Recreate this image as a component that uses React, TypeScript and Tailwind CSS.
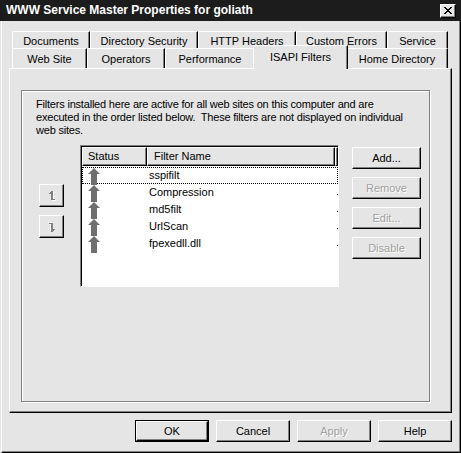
import React from 'react';

const font = "font-['Liberation_Sans',Arial,sans-serif]";
const raised =
  'bg-[#e5e5e5] border-t border-l border-t-white border-l-white border-r border-b border-r-black border-b-black shadow-[inset_-1px_-1px_0_#808080]';
const disabledText = 'text-[#a0a0a0] [text-shadow:1px_1px_0_#fff]';

const topTabs: [string, number][] = [
  ['Documents', 78],
  ['Directory Security', 108],
  ['HTTP Headers', 98],
  ['Custom Errors', 91],
  ['Service', 61],
];

const frontTabs: [string, number][] = [
  ['Web Site', 75],
  ['Operators', 78],
  ['Performance', 90],
  ['ISAPI Filters', 91],
  ['Home Directory', 102],
];

const filters = ['sspifilt', 'Compression', 'md5filt', 'UrlScan', 'fpexedll.dll'];

function StatusArrow() {
  return (
    <svg width="13" height="17" viewBox="0 0 13 17" className="shrink-0">
      <polygon points="6,0 12,6 9,6 9,17 3,17 3,6 0,6" fill="#6f6f6f" />
    </svg>
  );
}

function MoveGlyph({ down }: { down?: boolean }) {
  const shape = (
    <>
      <rect x="3" y="0" width="2" height="9" />
      <rect x="1" y="2" width="2" height="1" />
      <rect x="2" y="1" width="1" height="2" />
      <rect x="5" y="8" width="2" height="1" />
    </>
  );
  return (
    <svg width="8" height="10" viewBox="0 0 8 10" className={down ? 'rotate-180' : ''}>
      <g fill="#fff" transform="translate(1 1)">
        {shape}
      </g>
      <g fill="#808080">{shape}</g>
    </svg>
  );
}

function Button({
  label,
  disabled,
  primary,
  className = '',
}: {
  label: string;
  disabled?: boolean;
  primary?: boolean;
  className?: string;
}) {
  const inner = (
    <div
      className={`flex h-full w-full items-center justify-center ${raised} ${
        disabled ? disabledText : 'text-black'
      }`}
    >
      {label}
    </div>
  );
  if (primary) {
    return <div className={`border border-black ${className}`}>{inner}</div>;
  }
  return <div className={className}>{inner}</div>;
}

export default function App() {
  return (
    <div
      className={`${font} flex h-[453px] w-[461px] flex-col overflow-hidden bg-[#e5e5e5] text-[11px] leading-[13px] text-black`}
    >
      {/* title bar */}
      <div className="flex h-[21px] shrink-0 items-center justify-between bg-[#1c1c1c] pl-[6px] pr-[5px]">
        <span className="text-[12px] font-bold text-white">
          WWW Service Master Properties for goliath
        </span>
        <div
          className={`flex h-[14px] w-[16px] items-center justify-center ${raised}`}
        >
          <svg width="8" height="7" viewBox="0 0 8 7">
            <path d="M0 0 L7 7 M1 0 L8 7 M7 0 L0 7 M8 0 L1 7" stroke="#000" strokeWidth="1" />
          </svg>
        </div>
      </div>

      {/* body */}
      <div className="ml-px flex flex-1 flex-col border-b border-l border-r border-b-black border-l-white border-r-black shadow-[inset_-1px_-1px_0_#808080]">
        {/* tabs */}
        <div className="mt-[10px] pl-[10px]">
          <div className="flex h-[17px]">
            {topTabs.map(([label, w]) => (
              <div
                key={label}
                style={{ width: w }}
                className="flex items-start justify-center rounded-tl-[2px] border-l border-t border-l-white border-t-white border-r border-r-black pt-[3px] shadow-[inset_-1px_0_0_#808080]"
              >
                {label}
              </div>
            ))}
          </div>
          <div className="flex h-[20px] items-end">
            {frontTabs.map(([label, w]) => {
              const selected = label === 'ISAPI Filters';
              if (selected) {
                return (
                  <div
                    key={label}
                    style={{ width: w + 4 }}
                    className="relative z-10 -mx-[2px] -mb-px flex h-[24px] items-start justify-center rounded-tl-[2px] border-l border-t border-l-white border-t-white border-r border-r-black bg-[#e5e5e5] pt-[5px] shadow-[inset_-1px_0_0_#808080]"
                  >
                    {label}
                  </div>
                );
              }
              return (
                <div
                  key={label}
                  style={{ width: w }}
                  className="flex h-[20px] items-start justify-center rounded-tl-[2px] border-l border-t border-l-white border-t-white border-r border-r-black bg-[#e5e5e5] pt-[4px] shadow-[inset_-1px_0_0_#808080]"
                >
                  {label}
                </div>
              );
            })}
          </div>
        </div>

        {/* tab page */}
        <div className="ml-[7px] flex h-[345px] w-[443px] flex-col border-b border-l border-r border-t border-b-black border-l-white border-r-black border-t-white shadow-[inset_-1px_-1px_0_#808080]">
          <div className="ml-[11px] mt-[21px] h-[312px] w-[409px] border border-[#808080] shadow-[1px_1px_0_#fff,inset_1px_1px_0_#fff]">
            <p className="pl-[14px] pt-[7px] tracking-[-0.2px]">
              Filters installed here are active for all web sites on this computer and are
              <br />
              executed in the order listed below.&nbsp; These filters are not displayed on individual
              <br />
              web sites.
            </p>

            <div className="mt-[8px] flex pl-[17px]">
              <div className="flex flex-col gap-[8px] pt-[39px]">
                <div className={`flex h-[23px] w-[25px] items-center justify-center ${raised}`}>
                  <MoveGlyph />
                </div>
                <div className={`flex h-[23px] w-[25px] items-center justify-center ${raised}`}>
                  <MoveGlyph down />
                </div>
              </div>

              {/* list view */}
              <div className="ml-[16px] flex h-[142px] w-[259px] flex-col border border-b-white border-l-[#808080] border-r-white border-t-[#808080] bg-white shadow-[inset_1px_1px_0_#000]">
                <div className="ml-px mt-px flex h-[19px] shrink-0">
                  <div className={`flex w-[65px] items-center pl-[5px] ${raised}`}>Status</div>
                  <div className={`flex w-[188px] items-center pl-[6px] ${raised}`}>Filter Name</div>
                  <div className={`flex-1 ${raised}`} />
                </div>
                <div className="ml-px mt-px flex flex-col">
                  {filters.map((name, i) => (
                    <div
                      key={name}
                      className={`flex h-[17px] w-[256px] items-center ${
                        i === 0 ? 'border border-dotted border-black' : 'border border-transparent'
                      }`}
                    >
                      <div className="flex w-[66px] items-start self-start pl-[5px]">
                        <StatusArrow />
                      </div>
                      <span>{name}</span>
                      {i > 0 ? (
                        <span className="-mr-px ml-auto mt-[9px] h-px w-px self-start bg-black" />
                      ) : null}
                    </div>
                  ))}
                </div>
              </div>

              <div className="ml-[13px] mt-[2px] flex flex-col gap-[8px]">
                <Button label="Add..." className="h-[22px] w-[69px]" />
                <Button label="Remove" disabled className="h-[22px] w-[69px]" />
                <Button label="Edit..." disabled className="h-[22px] w-[69px]" />
                <Button label="Disable" disabled className="h-[22px] w-[69px]" />
              </div>
            </div>
          </div>
        </div>

        {/* dialog buttons */}
        <div className="mt-[7px] flex justify-end gap-[7px] pr-[8px]">
          <Button label="OK" primary className="h-[22px] w-[74px]" />
          <Button label="Cancel" className="h-[22px] w-[74px]" />
          <Button label="Apply" disabled className="h-[22px] w-[74px]" />
          <Button label="Help" className="h-[22px] w-[74px]" />
        </div>
      </div>
    </div>
  );
}
